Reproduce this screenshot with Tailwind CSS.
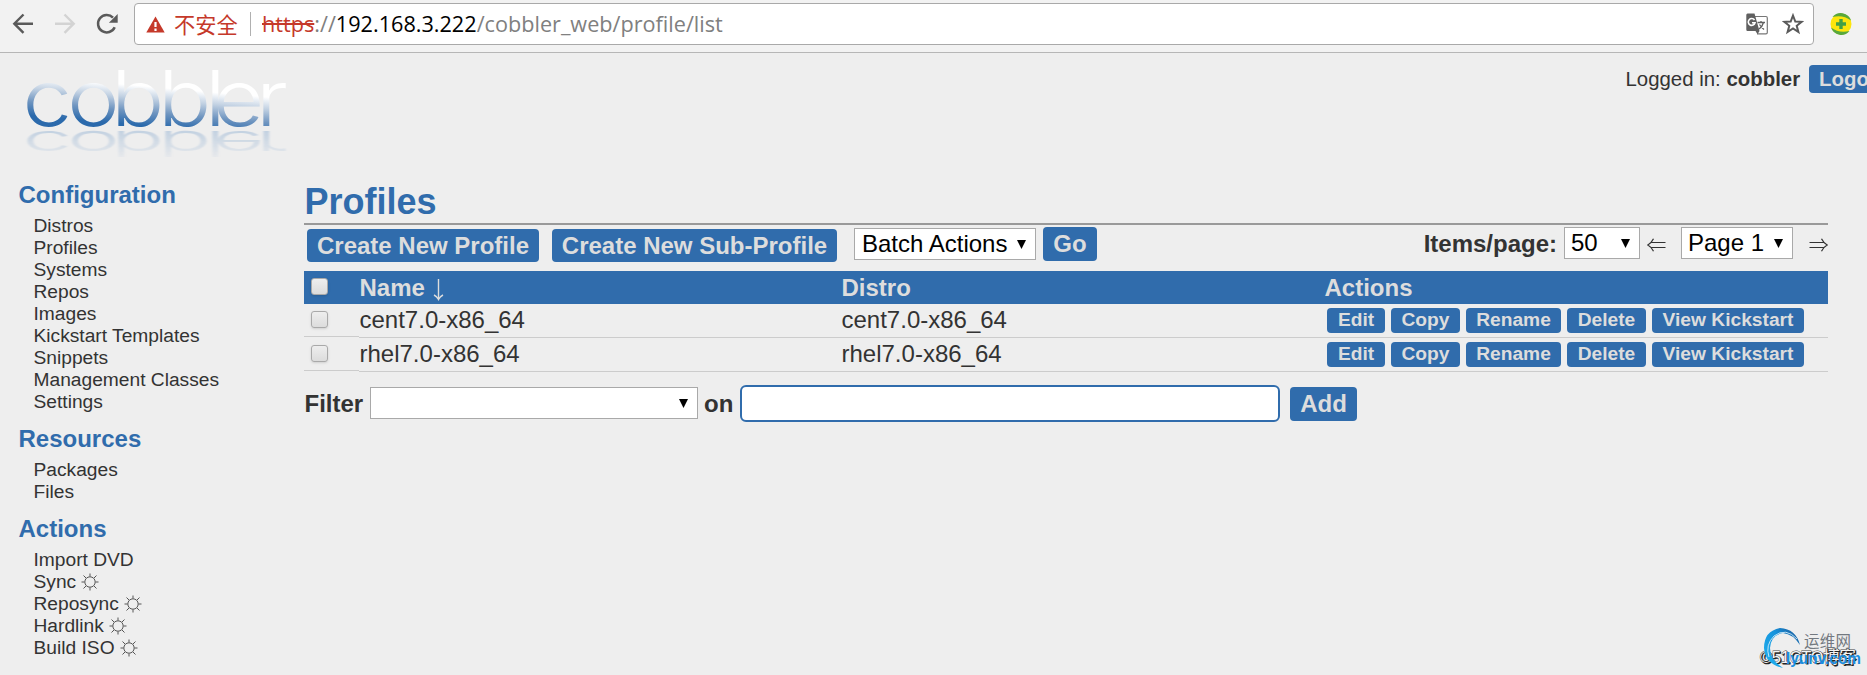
<!DOCTYPE html>
<html lang="en">
<head>
    <meta charset="UTF-8">
    <title>Cobbler Web Interface</title>
    <meta name="viewport" content="width=device-width, initial-scale=1.0" />
    <script src="https://cdn.jsdelivr.net/npm/@tailwindcss/browser@4"></script>
</head>
<body class="relative h-screen overflow-hidden bg-[#eeeeee] font-['Liberation_Sans',Arial,sans-serif] text-[24px] leading-[28px] text-[#333333]">

    <!-- browser bar -->
    <div class="flex h-[53px] items-start border-b border-[#b6b6b6] bg-[#f2f2f2] pt-[3px]">
        <svg class="mt-[10px] ml-[12px] h-[22px] w-[22px]" viewBox="0 0 22 22" fill="none" stroke="#5a5a5a" stroke-width="2.4"><path d="M21 10.700H2.500M11.500 1.500L2.300 10.700L11.500 19.900"/></svg>
        <svg class="mt-[10px] ml-[20px] h-[22px] w-[22px]" viewBox="0 0 22 22" fill="none" stroke="#d3d3d3" stroke-width="2.4"><path d="M1 10.700H19.500M10.500 1.500L19.700 10.700L10.500 19.900"/></svg>
        <svg class="mt-[10px] ml-[20px] h-[22px] w-[22px]" viewBox="0 0 22 22"><path d="M18.700 14.200A8.700 8.700 0 1 1 17 4.600" fill="none" stroke="#5a5a5a" stroke-width="2.500"/><path d="M21.700 1V9.800H12.900Z" fill="#5a5a5a"/></svg>
        <div class="ml-[16px] flex h-[42px] w-[1680px] items-center rounded-[4px] border border-[#a9a9a9] bg-white font-['Open_Sans','Noto_Sans_CJK_SC',sans-serif] text-[21.650px]">
            <svg class="ml-[11px] h-[17px] w-[19px]" viewBox="0 0 19 17"><path d="M9.500 .5L18.700 16.500H.3Z" fill="#c5392a"/><path d="M9.500 6V11M9.500 12.500V15" stroke="#fff" stroke-width="2.200"/></svg>
            <span class="ml-[9px] w-[66px] font-['Noto_Sans_CJK_SC',sans-serif] text-[21.200px] whitespace-nowrap text-[#c5392a]">不安全</span>
            <span class="ml-[10px] h-[24px] w-px bg-[#b0b0b0]"></span>
            <span class="ml-[11px] whitespace-nowrap text-[#808080]"><span class="text-[#c5392a] line-through decoration-2">https</span>://<span class="text-black">192.168.3.222</span>/cobbler_web/profile/list</span>
            <svg class="ml-auto h-[22px] w-[22px]" viewBox="0 0 22 22"><path d="M8 3.500H20Q21.300 3.500 21.300 5V19.500Q21.300 20.800 20 20.800H11" fill="#fff" stroke="#777" stroke-width="1.200"/><path d="M1.500 .5H8.500L13.500 18H1.500Q.3 18 .3 16.500V2Q.3 .5 1.500 .5ZM9.500 18H13.500L11.500 21.300Z" fill="#606060"/><path d="M8.500 7A3.400 3.400 0 1 0 9 9.800H6" fill="none" stroke="#fff" stroke-width="1.600"/><path d="M11.500 9.500H19M15 8V9.500M17.500 9.500Q16.500 13.500 13 16M13.500 11.500Q15.500 14.500 18 16.500" fill="none" stroke="#606060" stroke-width="1.300"/></svg>
            <svg class="mr-[9px] ml-[14px] h-[22px] w-[22px]" viewBox="0 0 22 22"><path d="M11 2.500L13.300 8.500L19.600 8.800L14.700 12.800L16.400 19L11 15.500L5.600 19L7.300 12.800L2.400 8.800L8.700 8.500Z" fill="none" stroke="#5a5a5a" stroke-width="2"/></svg>
        </div>
        <svg class="mt-[10px] ml-[16px] h-[22px] w-[22px]" viewBox="0 0 22 22"><circle cx="11" cy="11" r="10.500" fill="#fde50d"/><path d="M2.500 4A10.800 10.800 0 0 1 21 7.500Q13 1.500 2.500 4ZM19.500 18A10.800 10.800 0 0 1 1 14.500Q9 20.500 19.500 18Z" fill="#58a83c"/><path d="M11 6V16M6 11H16" stroke="#43a047" stroke-width="3.400"/></svg>
    </div>

    <!-- header -->
    <div class="flex h-[128px] justify-between">
        <svg class="ml-[20px] h-[120px] w-[270px]" viewBox="20 53 270 120" font-family="Inter, sans-serif" font-size="77" font-weight="300">
            <defs>
                <linearGradient id="ink" gradientUnits="userSpaceOnUse" x1="124" y1="86" x2="120" y2="125">
                    <stop offset="0" stop-color="#fff"/>
                    <stop offset=".3" stop-color="#c3d2e3"/>
                    <stop offset=".65" stop-color="#6f95c0"/>
                    <stop offset="1" stop-color="#2b6aac"/>
                </linearGradient>
                <linearGradient id="shade" gradientUnits="userSpaceOnUse" x1="0" y1="70" x2="0" y2="127">
                    <stop offset="0" stop-color="#9fb9d6" stop-opacity=".1"/>
                    <stop offset="1" stop-color="#9fb9d6" stop-opacity=".55"/>
                </linearGradient>
                <filter id="soft"><feGaussianBlur stdDeviation=".8"/></filter>
            </defs>
            <text x="19.6 58.5 96.5 137.4 178.3 185.2 222.6" y="126" fill="url(#ink)" transform="scale(1.15 1)">cobbler</text>
            <text x="19.6 58.5 96.5 137.4 178.3 185.2 222.6" y="126" fill="url(#shade)" filter="url(#soft)" transform="translate(0 189) scale(1.15 -.46)">cobbler</text>
        </svg>
        <div class="mt-[12px] flex h-[28px] w-[242px] shrink-0 overflow-hidden pl-[.5px] text-[20.400px] whitespace-nowrap">
            <span>Logged in: <b>cobbler</b></span>
            <span class="ml-[9px] rounded-[4px] bg-[#306cac] px-[10px] font-bold text-[#dddddd]">Logout</span>
        </div>
    </div>

    <div class="flex">
        <!-- menu -->
        <div class="w-[304px] shrink-0 pl-[18.500px] text-[19.200px] leading-[22px]">
            <h1 class="mb-[6px] text-[24px] leading-[28px] font-bold text-[#306cac]">Configuration</h1>
            <ul class="mb-[12px] pl-[15px]">
                <li>Distros</li>
                <li>Profiles</li>
                <li>Systems</li>
                <li>Repos</li>
                <li>Images</li>
                <li>Kickstart Templates</li>
                <li>Snippets</li>
                <li>Management Classes</li>
                <li>Settings</li>
            </ul>
            <h1 class="mb-[6px] text-[24px] leading-[28px] font-bold text-[#306cac]">Resources</h1>
            <ul class="mb-[12px] pl-[15px]">
                <li>Packages</li>
                <li>Files</li>
            </ul>
            <h1 class="mb-[6px] text-[24px] leading-[28px] font-bold text-[#306cac]">Actions</h1>
            <svg class="hidden"><symbol id="sun" viewBox="0 0 18 18"><circle cx="9" cy="9" r="5.200"/><path d="M9 .5V3.500M9 14.500V17.500M.5 9H3.500M14.500 9H17.500M2.500 2.500L5 5M13 13L15.500 15.500M2.500 15.500L5 13M13 5L15.500 2.500"/></symbol></svg>
            <ul class="pl-[15px]">
                <li>Import DVD</li>
                <li class="flex items-center gap-[5px]">Sync <svg class="h-[18px] w-[18px] fill-none stroke-[#555555]"><use href="#sun"/></svg></li>
                <li class="flex items-center gap-[5px]">Reposync <svg class="h-[18px] w-[18px] fill-none stroke-[#555555]"><use href="#sun"/></svg></li>
                <li class="flex items-center gap-[5px]">Hardlink <svg class="h-[18px] w-[18px] fill-none stroke-[#555555]"><use href="#sun"/></svg></li>
                <li class="flex items-center gap-[5px]">Build ISO <svg class="h-[18px] w-[18px] fill-none stroke-[#555555]"><use href="#sun"/></svg></li>
            </ul>
        </div>
        <!-- end menu -->

        <!-- content -->
        <div class="w-[1524px] shrink-0">
            <h1 class="h-[42px] pl-[.5px] text-[36px] leading-[41px] font-bold text-[#306cac]">Profiles</h1>
            <div class="h-[2px] bg-[#999999]"></div>

            <!-- toolbar -->
            <div class="flex h-[46px] items-start pt-[2px] whitespace-nowrap">
                <span class="mt-[2px] ml-[3px] h-[33px] w-[232px] rounded-[4px] bg-[#306cac] text-center leading-[33px] font-bold text-[#dddddd]">Create New Profile</span>
                <span class="mt-[2px] ml-[13px] h-[33px] w-[285px] rounded-[4px] bg-[#306cac] text-center leading-[33px] font-bold text-[#dddddd]">Create New Sub-Profile</span>
                <span class="mt-[1px] ml-[17px] flex h-[32px] w-[182px] items-center justify-between border border-[#a9a9a9] bg-white pr-[9px] pl-[7px] text-black">Batch Actions <svg class="h-[9px] w-[9px]" viewBox="0 0 9 9"><path d="M0 0H9L4.500 9Z"/></svg></span>
                <span class="ml-[7px] h-[34px] w-[54px] rounded-[4px] bg-[#306cac] text-center leading-[33px] font-bold text-[#dddddd]">Go</span>
                <span class="ml-auto leading-[33px] font-bold">Items/page:</span>
                <span class="ml-[7px] flex h-[32px] w-[76px] items-center justify-between border border-[#a9a9a9] bg-white pr-[9px] pl-[6px] text-black">50 <svg class="h-[9px] w-[9px]" viewBox="0 0 9 9"><path d="M0 0H9L4.500 9Z"/></svg></span>
                <svg class="mt-[11px] ml-[7px] h-[14px] w-[19px]" viewBox="0 0 19 14" fill="none" stroke="#333" stroke-width="1.200"><path d="M18.500 4.500H4M18.500 9.500H4M6.500 .8Q4.500 5 .8 7Q4.500 9 6.500 13.200"/></svg>
                <span class="ml-[15px] flex h-[32px] w-[112px] items-center justify-between border border-[#a9a9a9] bg-white pr-[9px] pl-[6px] text-black">Page 1 <svg class="h-[9px] w-[9px]" viewBox="0 0 9 9"><path d="M0 0H9L4.500 9Z"/></svg></span>
                <svg class="mt-[11px] ml-[16px] h-[14px] w-[19px]" viewBox="0 0 19 14" fill="none" stroke="#333" stroke-width="1.200"><path d="M.5 4.500H15M.5 9.500H15M12.500 .8Q14.500 5 18.200 7Q14.500 9 12.500 13.200"/></svg>
            </div>

            <!-- profile list -->
            <div class="grid h-[33px] grid-cols-[55.500px_482px_483px_1fr] bg-[#306cac] leading-[33px] font-bold text-[#dddddd]">
                <div class="pt-[7px] pl-[7px]"><input type="checkbox" class="block h-[17px] w-[17px] appearance-none rounded-[3px] border border-[#a9a9a9] bg-linear-to-b from-[#eeeeee] to-[#dcdcdc] shadow-sm"></div>
                <div class="flex">Name <svg class="mt-[8px] ml-[8px] h-[22px] w-[11px]" viewBox="0 0 11 22"><path d="M5.500 0V20M1 16Q4 17.500 5.500 20.500Q7 17.500 10 16" fill="none" stroke="#dddddd" stroke-width="1.400"/></svg></div>
                <div>Distro</div>
                <div>Actions</div>
            </div>
            <div class="grid h-[34px] grid-cols-[55px_482px_483px_1fr] leading-[31px]">
                <div class="h-[33px] border-b border-[#cccccc] pt-[7px] pl-[7px]"><input type="checkbox" class="block h-[17px] w-[17px] appearance-none rounded-[3px] border border-[#a9a9a9] bg-linear-to-b from-[#eeeeee] to-[#dcdcdc] shadow-sm"></div>
                <div class="border-b border-[#cccccc] pl-[.5px]">cent7.0-x86_64</div>
                <div class="border-b border-[#cccccc] pl-[.5px]">cent7.0-x86_64</div>
                <div class="flex gap-[6px] border-b border-[#cccccc] pt-[4px] pl-[3px] text-center text-[19.200px] leading-[23px] font-bold text-[#dddddd]">
                    <span class="h-[25px] w-[58px] rounded-[4px] bg-[#306cac]">Edit</span>
                    <span class="h-[25px] w-[69px] rounded-[4px] bg-[#306cac]">Copy</span>
                    <span class="h-[25px] w-[95px] rounded-[4px] bg-[#306cac]">Rename</span>
                    <span class="h-[25px] w-[79px] rounded-[4px] bg-[#306cac]">Delete</span>
                    <span class="h-[25px] w-[152px] rounded-[4px] bg-[#306cac]">View Kickstart</span>
                </div>
            </div>
            <div class="grid h-[34px] grid-cols-[55px_482px_483px_1fr] leading-[31px]">
                <div class="h-[33px] border-b border-[#cccccc] pt-[7px] pl-[7px]"><input type="checkbox" class="block h-[17px] w-[17px] appearance-none rounded-[3px] border border-[#a9a9a9] bg-linear-to-b from-[#eeeeee] to-[#dcdcdc] shadow-sm"></div>
                <div class="border-b border-[#cccccc] pl-[.5px]">rhel7.0-x86_64</div>
                <div class="border-b border-[#cccccc] pl-[.5px]">rhel7.0-x86_64</div>
                <div class="flex gap-[6px] border-b border-[#cccccc] pt-[4px] pl-[3px] text-center text-[19.200px] leading-[23px] font-bold text-[#dddddd]">
                    <span class="h-[25px] w-[58px] rounded-[4px] bg-[#306cac]">Edit</span>
                    <span class="h-[25px] w-[69px] rounded-[4px] bg-[#306cac]">Copy</span>
                    <span class="h-[25px] w-[95px] rounded-[4px] bg-[#306cac]">Rename</span>
                    <span class="h-[25px] w-[79px] rounded-[4px] bg-[#306cac]">Delete</span>
                    <span class="h-[25px] w-[152px] rounded-[4px] bg-[#306cac]">View Kickstart</span>
                </div>
            </div>

            <!-- filter -->
            <div class="mt-[13px] flex h-[37px] items-start leading-[37px] font-bold">
                <span class="w-[66px] pl-[.5px]">Filter</span>
                <span class="mt-[2px] flex h-[32px] w-[328px] items-center justify-end border border-[#a9a9a9] bg-white pr-[9px]"><svg class="h-[9px] w-[9px]" viewBox="0 0 9 9"><path d="M0 0H9L4.500 9Z"/></svg></span>
                <span class="ml-[6px] w-[36px]">on</span>
                <input type="text" class="h-[37px] w-[540px] rounded-[6px] border-2 border-[#306cac] bg-white px-2 font-normal outline-none">
                <span class="mt-[2px] ml-[10px] h-[34px] w-[67px] rounded-[4px] bg-[#306cac] text-center leading-[33px] text-[#dddddd]">Add</span>
            </div>
        </div>
        <!-- end content -->
    </div>

    <!-- watermark -->
    <svg class="absolute right-0 bottom-0 h-[55px] w-[117px]" viewBox="1750 620 117 55">
        <defs>
            <linearGradient id="swirl" x1="0" y1="1" x2="1" y2="0">
                <stop offset="0" stop-color="#22b4f0"/>
                <stop offset=".6" stop-color="#1593dc"/>
                <stop offset="1" stop-color="#1d4f8f"/>
            </linearGradient>
        </defs>
        <text class="[text-shadow:1px_1px_0_#222]" x="1760" y="663" font-family="Liberation Sans, Noto Sans CJK SC, sans-serif" font-size="16.500" textLength="96" fill="#f4f4f4" stroke="#444" stroke-width=".8" paint-order="stroke">©51CTO博客</text>
        <path d="M1800 645Q1796 629 1780 628Q1764 631 1764 648Q1765 664 1783 668Q1770 660 1770 648Q1771 635 1783 633Q1793 634 1800 645Z" fill="url(#swirl)"/>
        <path d="M1797 639Q1786 627 1774 636Q1765 645 1769 657" fill="none" stroke="#d5ecf8" stroke-width=".9"/>
        <text x="1804" y="647" font-family="Noto Sans CJK SC, sans-serif" font-size="15.500" textLength="47" fill="#737980">运维网</text>
        <text x="1786" y="664" font-family="Liberation Sans, sans-serif" font-size="16" font-weight="700" textLength="75" lengthAdjust="spacingAndGlyphs" fill="#1b8ee0">lyunv.com</text>
    </svg>
</body>
</html>
